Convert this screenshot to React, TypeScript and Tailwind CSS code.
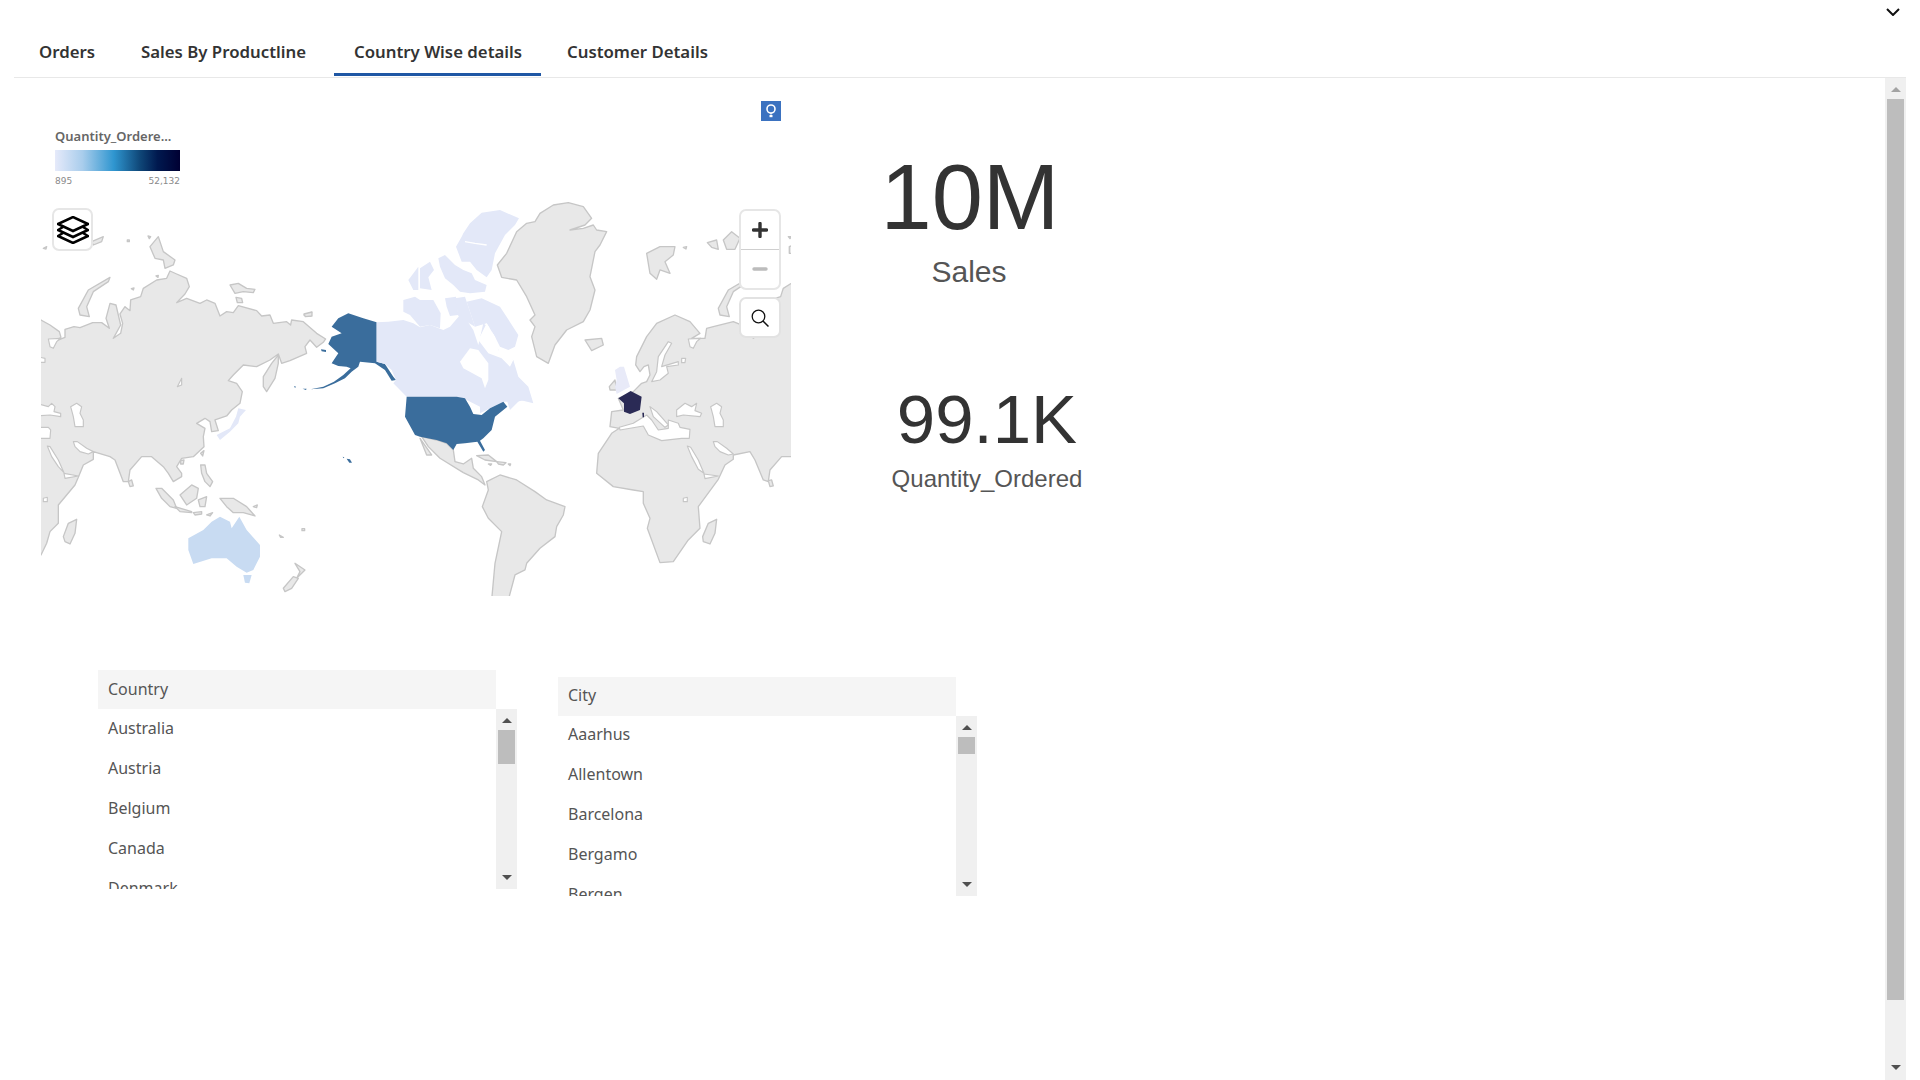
import React from "react";

const LAND = "#e8e8e8";
const EDGE = "#c6c6c6";
const landProps = { fill: LAND, stroke: EDGE, strokeWidth: 4, strokeLinejoin: "round" as const };
const seaProps = { fill: "#ffffff", stroke: EDGE, strokeWidth: 3.5, strokeLinejoin: "round" as const };

const leftLand = [
  "M-20,375 L33,390 L60,405 L88,425 L93,442 L80,452 L105,442 L105,418 L132,410 L150,413 L188,398 L215,398 L238,415 L228,385 L240,340 L258,345 L265,375 L272,405 L250,445 L272,430 L278,400 L270,372 L285,350 L300,362 L302,330 L332,320 L340,295 L380,270 L410,265 L420,243 L440,252 L470,265 L478,290 L465,312 L440,338 L470,325 L510,340 L530,330 L555,340 L570,378 L590,365 L610,368 L625,347 L680,362 L695,378 L720,375 L730,400 L770,395 L782,405 L785,390 L820,395 L860,430 L887,447 L880,457 L860,472 L840,450 L825,470 L830,490 L780,512 L755,520 L745,492 L720,510 L680,530 L640,525 L610,555 L595,572 L620,580 L637,605 L630,640 L605,660 L590,678 L555,690 L565,722 L545,725 L540,695 L525,685 L500,700 L525,715 L520,740 L522,770 L490,800 L455,805 L440,830 L455,850 L455,860 L430,875 L415,850 L400,830 L365,800 L335,800 L300,840 L295,875 L280,875 L255,810 L240,800 L190,785 L190,808 L160,825 L145,862 L135,885 L85,945 L85,1000 L60,1025 L50,1060 L33,1095 L-20,1130 Z",
  "M150,375 L145,355 L175,300 L240,262 L235,275 L190,305 L170,350 L178,380 Z",
  "M360,170 L385,140 L400,185 L435,210 L430,225 L405,235 L400,210 L375,205 Z",
  "M600,285 L625,280 L650,295 L675,298 L670,308 L640,305 L615,310 Z",
  "M618,322 L635,325 L638,338 L622,338 Z",
  "M700,560 L725,520 L745,495 L745,520 L735,565 L710,605 L700,590 Z",
  "M822,375 L845,367 L842,378 Z",
  "M185,155 L220,140 L215,155 L190,165 Z",
  "M105,1055 L100,1040 L115,1000 L140,988 L135,1030 L120,1062 Z",
  "M295,875 L305,870 L310,888 L300,890 Z",
  "M512,790 L522,782 L518,798 Z",
  "M452,812 L462,810 L460,822 L452,822 Z",
  "M512,825 L525,825 L530,850 L548,875 L540,890 L525,875 L515,850 Z",
  "M450,915 L485,885 L505,895 L500,925 L470,945 Z",
  "M378,895 L395,895 L430,930 L440,955 L420,950 L395,925 Z",
  "M435,950 L485,965 L485,968 L450,965 Z",
  "M505,930 L530,920 L525,950 L510,950 Z",
  "M570,925 L610,925 L650,950 L675,978 L640,968 L610,968 L590,950 Z",
  "M490,968 L515,965 L515,972 L495,975 Z",
  "M530,975 L548,968 L540,978 Z",
  "M795,1120 L825,1140 L800,1165 L810,1145 Z",
  "M760,1195 L790,1160 L805,1165 L785,1195 L765,1205 Z",
  "M748,1035 L760,1042 L752,1042 Z",
  "M816,1016 L824,1016 L824,1022 L816,1022 Z",
  "M670,950 L682,945 L680,953 Z",
  "M292,150 L298,150 L298,155 L292,155 Z",
  "M40,175 L50,170 L48,177 Z",
  "M354,138 L362,140 L358,146 Z",
  "M304,296 L312,294 L310,300 Z",
  "M378,258 L385,256 L384,262 Z",
  "M822,372 L846,366 L846,378 L826,380 Z",
];

const leftSea = [
  "M20,640 L55,650 L65,640 L75,650 L72,665 L92,670 L92,680 L60,675 L20,678 Z",
  "M20,712 L55,712 L62,720 L60,745 L20,745 Z",
  "M122,650 L140,640 L155,650 L150,670 L160,690 L160,710 L135,710 L130,680 Z",
  "M52,768 L60,770 L85,810 L102,848 L85,830 L65,800 Z",
  "M102,850 L145,858 L105,865 Z",
  "M130,755 L142,755 L170,775 L190,785 L175,792 L150,785 L135,770 Z",
  "M55,447 L92,445 L80,455 L70,475 L60,470 Z",
  "M20,500 L45,505 L45,517 L20,517 Z",
  "M442,590 L455,565 L455,585 Z",
  "M40,925 L52,922 L52,935 L40,935 Z",
];

const rightLand = [
  "M1220,270 L1130,270 L1090,295 L1082,320 L1052,330 L1050,362 L1035,350 L1020,372 L1028,400 L1022,430 L1000,445 L990,415 L940,395 L880,410 L860,415 L855,445 L815,445 L840,430 L810,395 L765,375 L710,400 L680,440 L650,500 L647,525 L660,545 L672,530 L685,525 L690,555 L680,575 L665,580 L640,605 L595,625 L610,660 L575,665 L570,710 L598,715 L575,730 L535,790 L530,850 L580,890 L640,900 L670,905 L670,940 L690,985 L682,1015 L720,1118 L760,1115 L805,1050 L840,1015 L835,950 L895,868 L915,825 L940,808 L940,795 L990,785 L1005,810 L1030,870 L1045,875 L1050,840 L1085,800 L1115,800 L1220,800 Z",
  "M232,225 L260,190 L290,125 L320,100 L345,95 L360,70 L400,45 L445,38 L490,50 L515,85 L495,105 L450,120 L490,115 L520,105 L530,120 L560,125 L540,165 L525,185 L510,260 L525,300 L510,360 L490,395 L440,420 L405,465 L385,520 L350,500 L335,440 L345,410 L330,390 L345,375 L320,320 L290,270 L245,262 Z",
  "M495,450 L545,445 L550,465 L515,482 Z",
  "M680,190 L720,170 L765,170 L760,195 L735,215 L750,250 L720,240 L710,268 L690,250 Z",
  "M790,172 L800,170 L798,177 Z",
  "M862,158 L890,150 L895,178 L875,172 Z",
  "M910,150 L935,125 L960,145 L945,178 L920,178 Z",
  "M1105,140 L1115,140 L1110,146 Z",
  "M1108,170 L1120,165 L1120,190 L1108,190 Z",
  "M900,375 L895,355 L925,300 L990,262 L985,275 L940,305 L920,350 L928,380 Z",
  "M568,590 L585,570 L590,600 L570,600 Z",
  "M1045,872 L1055,870 L1060,888 L1050,890 Z",
  "M850,1055 L848,1040 L865,1000 L890,988 L885,1030 L870,1062 Z",
  "M5,740 L50,750 L80,760 L100,780 L105,815 L130,822 L155,805 L160,835 L185,860 L195,885 L175,870 L130,848 L60,805 L25,770 Z",
  "M0,745 L35,795 L20,795 Z",
  "M170,797 L205,795 L230,815 L195,810 Z",
  "M230,815 L258,818 L250,825 L235,822 Z",
  "M205,822 L215,822 L212,826 Z",
  "M265,822 L272,822 L270,827 Z",
  "M200,875 L240,855 L290,870 L345,905 L380,930 L435,950 L430,975 L410,1010 L405,1040 L360,1075 L320,1120 L315,1140 L285,1155 L265,1230 L215,1230 L225,1120 L245,1025 L205,985 L187,950 L205,900 Z",
];

const rightSea = [
  "M745,455 L755,460 L735,495 L725,530 L775,515 L775,525 L740,530 L745,550 L720,570 L695,575 L710,545 L715,500 Z",
  "M785,505 L797,505 L795,518 L785,518 Z",
  "M770,660 L795,640 L815,650 L830,640 L825,662 L845,670 L840,680 L790,675 L770,680 Z",
  "M872,650 L890,640 L905,650 L900,670 L910,690 L910,710 L885,710 L880,680 Z",
  "M598,712 L640,700 L680,675 L695,690 L715,720 L745,715 L745,690 L775,700 L780,712 L810,718 L808,745 L785,745 L725,752 L685,735 L670,708 L600,720 Z",
  "M690,650 L710,665 L745,705 L735,712 L700,680 Z",
  "M802,768 L812,772 L835,810 L852,850 L835,838 L815,800 Z",
  "M852,852 L895,858 L855,866 Z",
  "M880,755 L892,755 L920,775 L940,792 L925,795 L900,785 L885,770 Z",
  "M790,925 L802,922 L802,935 L790,935 Z",
  "M805,447 L842,445 L830,455 L820,475 L810,470 Z",
];

const canada = [
  "M-130,397 L-95,395 L-50,390 L-20,400 L0,412 L30,405 L70,420 L90,410 L120,375 L140,390 L160,420 L175,465 L190,400 L215,420 L230,470 L250,505 L280,510 L295,560 L325,590 L340,640 L300,630 L270,660 L262,635 L250,635 L180,670 L180,650 L130,625 L110,620 L-40,620 L-60,600 L-80,580 L-72,570 L-85,540 L-105,522 L-130,515 Z",
  "M130,130 L150,100 L185,68 L240,60 L297,85 L285,105 L255,135 L225,190 L215,240 L200,262 L170,240 L150,215 L125,215 L108,170 L125,140 Z",
  "M0,235 L30,215 L42,240 L25,262 L35,300 L0,295 Z",
  "M55,205 L75,195 L105,225 L130,240 L155,250 L165,270 L200,285 L195,305 L150,310 L120,305 L100,285 L75,265 L60,230 Z",
  "M-50,330 L-15,320 L0,330 L40,330 L62,370 L60,415 L30,405 L0,410 L-30,375 L-50,365 Z",
  "M75,325 L108,320 L115,375 L90,378 L80,350 Z",
  "M105,325 L135,320 L150,365 L165,410 L140,395 L115,378 Z",
  "M140,335 L185,325 L240,350 L295,435 L285,470 L265,480 L240,470 L225,440 L200,400 L165,410 L150,365 Z",
  "M-35,270 L-5,230 L-5,300 L-20,300 Z",
  "M260,615 L300,605 L315,630 L290,635 Z",
];

const alaska = [
  "M1040,397 L1040,515 L1065,522 L1090,560 L1098,570 L1085,572 L1065,540 L1035,520 L990,515 L985,530 L965,545 L945,565 L915,580 L880,595 L842,598 L880,590 L912,575 L940,555 L962,535 L950,530 L925,528 L905,520 L925,490 L895,462 L905,440 L935,430 L905,410 L925,385 L955,370 L1000,385 Z",
  "M873,478 L888,480 L888,486 L875,484 Z",
  "M938,800 L943,802 L941,805 Z",
  "M950,806 L960,808 L966,818 L958,818 Z",
  "M792,588 L798,590 L795,594 Z",
  "M818,596 L830,596 L828,600 Z",
];

const usa =
  "M-40,620 L110,620 L135,625 L150,650 L160,672 L185,675 L210,655 L250,635 L262,650 L225,680 L215,720 L190,745 L180,752 L195,780 L190,785 L172,755 L135,760 L110,762 L100,780 L80,760 L50,750 L0,740 L-15,735 L-45,680 Z";

function WorldMap() {
  return (
    <svg viewBox="41 190 750 406" className="mt-[112px] block h-[406px] w-[750px]">
      <g transform="translate(30 190) scale(0.3333)">
        {leftLand.map((d) => <path key={d} d={d} {...landProps} />)}
        {leftSea.map((d) => <path key={d} d={d} {...seaProps} />)}
        <path d="M625,655 L648,660 L630,680 L625,700 L600,725 L570,750 L560,735 L600,715 L618,680 Z" fill="#e3e8f8" />
        <path d="M475,1045 L520,1020 L545,995 L570,980 L600,995 L605,1015 L628,980 L650,1020 L690,1065 L690,1100 L670,1140 L650,1148 L620,1130 L590,1105 L545,1105 L490,1122 L475,1080 Z" fill="#c8dbf2" />
        <path d="M640,1155 L665,1155 L658,1180 L645,1178 Z" fill="#c8dbf2" />
        {alaska.map((d) => <path key={d} d={d} fill="#3a6d9c" />)}
      </g>
      <g transform="translate(420 190) scale(0.3333)">
        {rightLand.map((d) => <path key={d} d={d} {...landProps} />)}
        {rightSea.map((d) => <path key={d} d={d} {...seaProps} />)}
        {canada.map((d) => <path key={d} d={d} fill="#e3e8f8" />)}
        <path d="M120,515 L150,475 L175,480 L205,520 L205,570 L195,595 L185,565 L130,535 Z" fill="#ffffff" />
        <path d="M175,450 L200,400 L225,440 L235,480 L280,510 L270,530 L245,505 L205,490 Z" fill="#ffffff" />
        <path d="M135,155 L165,160 L200,165" fill="none" stroke="#ffffff" strokeWidth="4" />
        <path d={usa} fill="#3a6d9c" />
        <path d="M585,540 L600,530 L612,530 L630,590 L590,612 L585,590 L590,570 Z" fill="#e8eaf8" />
        <path d="M595,625 L632,603 L665,620 L660,660 L630,672 L612,665 L612,640 Z" fill="#2a2a55" />
        <path d="M667,668 L672,668 L672,682 L668,682 Z" fill="#2a2a55" />
      </g>
    </svg>
  );
}

function Arrow({ up, color }: { up?: boolean; color: string }) {
  return (
    <svg viewBox="0 0 10 5" className="block h-[5px] w-[10px]">
      <path d={up ? "M5,0 L10,5 L0,5 Z" : "M0,0 L10,0 L5,5 Z"} fill={color} />
    </svg>
  );
}

function ListBox({ title, items, thumb, titleClass, rowsClass }: { title: string; items: string[]; thumb: string; titleClass: string; rowsClass: string }) {
  return (
    <div className="w-[419px]">
      <div className={`flex h-[39px] w-[398px] items-center bg-[#f5f5f5] px-[10px] ${titleClass}`}>{title}</div>
      <div className="flex h-[180px]">
        <div className="h-[180px] w-[398px] overflow-hidden">
          <div className={rowsClass}>
            {items.map((t) => (
              <div key={t} className="flex h-[40px] items-center px-[10px] pb-[2px]">{t}</div>
            ))}
          </div>
        </div>
        <div className="flex h-[180px] w-[21px] flex-col items-center bg-[#f0f0f0] pb-[9px] pt-[9px]">
          <Arrow up color="#505050" />
          <div className={`mt-[7px] w-[17px] bg-[#bdbdbd] ${thumb}`} />
          <div className="mt-auto"><Arrow color="#505050" /></div>
        </div>
      </div>
    </div>
  );
}

const tabs = [
  { label: "Orders", width: "w-[96px]" },
  { label: "Sales By Productline", width: "w-[207px]" },
  { label: "Country Wise details", width: "w-[207px]" },
  { label: "Customer Details", width: "w-[180px]" },
];

export default function App() {
  return (
    <div className="flex h-screen w-full flex-col overflow-hidden bg-white font-['Noto_Sans','Liberation_Sans',sans-serif] text-[16px] text-[#555555]">
      <div className="relative mx-[14px] flex h-[78px] shrink-0 items-end border-b border-[#e8e8e8] pb-[1px] pl-[5px]">
        <div className="flex gap-[6px]">
          {tabs.map((t) => (
            <div
              key={t.label}
              className={`flex h-[46px] items-center whitespace-nowrap border-b-[3px] pl-[20px] pt-[1px] text-[16.8px] font-semibold text-[#333333] ${t.width} ${
                t.label === "Country Wise details" ? "border-[#1f57a4]" : "border-transparent"
              }`}
            >
              {t.label}
            </div>
          ))}
        </div>
        <svg viewBox="0 0 14 8" className="absolute right-[6px] top-[8px] h-[8px] w-[14px]">
          <path d="M1,1 L7,7 L13,1" fill="none" stroke="#111111" strokeWidth="2" />
        </svg>
      </div>

      <div className="mr-[14px] flex min-h-0 flex-1">
        <div className="min-w-0 flex-1">
          <div className="flex h-[592px]">
            <div className="relative ml-[41px] h-[592px] w-[750px]">
              <WorldMap />
              <div className="absolute left-[14px] top-[50px] w-[125px]">
                <div className="h-[16px] whitespace-nowrap text-[13px] font-semibold leading-[16px] text-[#666666]">Quantity_Ordere...</div>
                <div className="mt-[6px] h-[21px] bg-[linear-gradient(to_right,#e6eafa_0%,#a9cdec_22%,#2f96d0_47%,#0f4778_68%,#00194f_82%,#000033_100%)]" />
                <div className="mt-[5px] flex justify-between font-['DejaVu_Sans',sans-serif] text-[9px] leading-[10px] text-[#8a8a8a]">
                  <span>895</span>
                  <span>52,132</span>
                </div>
              </div>
              <div className="absolute left-[720px] top-[23px] flex h-[20px] w-[20px] items-center justify-center bg-[#3b72c0]">
                <svg viewBox="0 0 20 20" className="h-[20px] w-[20px]">
                  <circle cx="10" cy="8" r="4" fill="none" stroke="#ffffff" strokeWidth="1.6" />
                  <path d="M10,12 L10,13.5" stroke="#ffffff" strokeWidth="1.4" />
                  <rect x="8.5" y="14" width="3" height="2.2" fill="#ffffff" />
                </svg>
              </div>
              <div className="absolute left-[11px] top-[130px] flex h-[43px] w-[41px] items-center justify-center rounded-[7px] border-2 border-[#e6e6e6] bg-white">
                <svg viewBox="0 0 32 28" className="h-[28px] w-[32px]">
                  <g fill="none" stroke="#000000" strokeWidth="2.5" strokeLinejoin="miter">
                    <path d="M16,1 L31,8 L16,15 L1,8 Z" />
                    <path d="M6,11 L1,14 L16,21 L31,14 L26,11" />
                    <path d="M6,17 L1,20 L16,27 L31,20 L26,17" />
                  </g>
                </svg>
              </div>
              <div className="absolute left-[698px] top-[131px] flex w-[42px] flex-col rounded-[7px] border-2 border-[#e6e6e6] bg-white">
                <div className="flex h-[39px] items-center justify-center border-b border-[#cfcfcf]">
                  <svg viewBox="0 0 16 16" className="h-[16px] w-[16px]">
                    <path d="M8,1.5 L8,14.5 M1.5,8 L14.5,8" stroke="#333333" strokeWidth="3.4" strokeLinecap="round" />
                  </svg>
                </div>
                <div className="flex h-[38px] items-center justify-center">
                  <svg viewBox="0 0 16 16" className="h-[16px] w-[16px]">
                    <path d="M2,8 L14,8" stroke="#bcbcbc" strokeWidth="3.4" strokeLinecap="round" />
                  </svg>
                </div>
              </div>
              <div className="absolute left-[698px] top-[219px] flex h-[41px] w-[42px] items-center justify-center rounded-[7px] border-2 border-[#e2e2e2] bg-white">
                <svg viewBox="0 0 20 20" className="h-[20px] w-[20px]">
                  <circle cx="8.5" cy="8.5" r="6.3" fill="none" stroke="#111111" strokeWidth="1.3" />
                  <path d="M13,13 L18.5,18.5" stroke="#111111" strokeWidth="1.5" />
                </svg>
              </div>
            </div>
            <div className="flex flex-col font-['Liberation_Sans',sans-serif]">
              <div className="ml-[79px] mt-[73px] w-[200px] text-center text-[92px] leading-[92px] text-[#333333]">10M</div>
              <div className="ml-[78px] mt-[14px] w-[200px] text-center text-[30px] leading-[30px] text-[#555555]">Sales</div>
              <div className="ml-[96px] mt-[98px] w-[200px] text-center text-[69px] leading-[69px] text-[#333333]">99.1K</div>
              <div className="ml-[96px] mt-[13px] w-[200px] text-center text-[24px] leading-[24px] text-[#555555]">Quantity_Ordered</div>
            </div>
          </div>
          <div className="ml-[98px] flex items-start gap-[41px]">
            <ListBox title="Country" titleClass="pb-[2px]" rowsClass="mt-0" items={["Australia", "Austria", "Belgium", "Canada", "Denmark"]} thumb="h-[34px]" />
            <div className="mt-[7px]">
              <ListBox title="City" titleClass="pb-[4px]" rowsClass="-mt-[1px]" items={["Aaarhus", "Allentown", "Barcelona", "Bergamo", "Bergen"]} thumb="h-[17px]" />
            </div>
          </div>
        </div>
        <div className="flex h-full w-[21px] shrink-0 flex-col items-center bg-[#f0f0f0] pb-[10px] pt-[9px]">
          <Arrow up color="#a3a3a3" />
          <div className="mt-[7px] h-[901px] w-[17px] bg-[#bdbdbd]" />
          <div className="mt-auto"><Arrow color="#505050" /></div>
        </div>
      </div>
    </div>
  );
}
